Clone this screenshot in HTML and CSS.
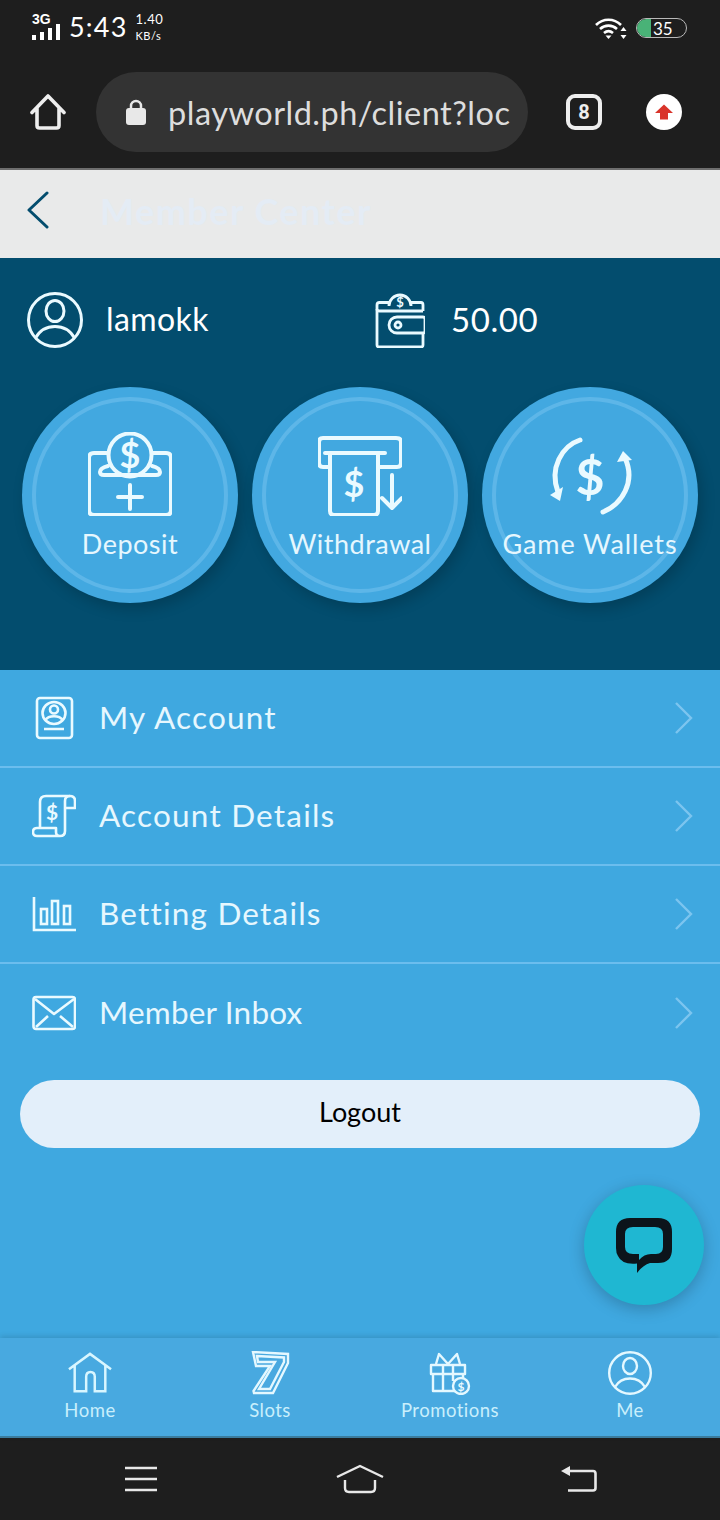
FILE: index.html
```html
<!DOCTYPE html>
<html lang="en">
<head>
  <meta charset="UTF-8" />
  <meta name="viewport" content="width=device-width, initial-scale=1.0"/>
  <title>Member Center</title>
  <link rel="stylesheet" href="styles.css">
</head>
<body>
  <div class="phone-top">
    <div class="status-bar">
      <div class="status-left">
        <div class="signal">
          <span class="signal-type">3G</span>
          <svg class="signal-bars" viewBox="0 0 28 16"><path d="M0 11h4v5H0zM8 8h4v8H8zM16 4h4v12h-4zM24 0h4v16h-4z" fill="#fff"/></svg>
        </div>
        <span class="clock">5:43</span>
        <div class="speed"><span>1.40</span><span class="speed-unit">KB/s</span></div>
      </div>
      <div class="status-right">
        <svg class="wifi" viewBox="0 0 32 22" fill="none" stroke="#fff" stroke-width="2.600">
          <path d="M1 7C8 0 19 0 26 7M5 11c5-4.500 12-4.500 17 0M9 15c3-2.500 6-2.500 9 0"/>
          <path d="M10.500 17.500h6l-3 3.500z" fill="#fff" stroke="none"/>
          <path d="M28.500 9l3 4h-6zM28.500 21l3-4h-6z" fill="#fff" stroke="none"/>
        </svg>
        <div class="battery"><span class="battery-fill"></span><span class="battery-num">35</span></div>
      </div>
    </div>
    <div class="browser-bar">
      <svg class="browser-home" viewBox="0 0 36 36" fill="none" stroke="#eee" stroke-width="3.600" stroke-linejoin="round" stroke-linecap="round">
        <path d="M2 18.500 18 2l16 16.500M7 14v17.500q0 2.500 2.500 2.500h17q2.500 0 2.500-2.500V14"/>
      </svg>
      <div class="url-pill">
        <svg class="lock" viewBox="0 0 20 26"><path d="M5 11V7a5 5 0 0 1 10 0v4" fill="none" stroke="#e8e8e8" stroke-width="2.500"/><rect y="9" width="20" height="17" rx="3" fill="#e8e8e8"/></svg>
        <span class="url-text">playworld.ph/client?loc</span>
      </div>
      <span class="tab-count">8</span>
      <span class="update-btn">
        <svg viewBox="0 0 20 20"><path d="M10 2.500 19 11h-5v6.500H6V11H1z" fill="#d9342b"/></svg>
      </span>
    </div>
  </div>

  <header class="page-head">
    <svg class="back-arrow" viewBox="0 0 22 38" fill="none" stroke="#034d6e" stroke-width="3" stroke-linecap="round" stroke-linejoin="round"><path d="M20 2 2 19l18 17"/></svg>
    <span class="page-title">Member Center</span>
  </header>

  <section class="hero">
    <div class="account-row">
      <div class="account-cell">
        <svg class="account-icon" viewBox="0 0 56 56" fill="none" stroke="#eafaff" stroke-width="3">
          <circle cx="28" cy="28" r="26.500"/><ellipse cx="28" cy="19" rx="9" ry="10.500"/>
          <path d="M8.500 46C13 38 20 34.500 28 34.500S43 38 47.500 46"/>
        </svg>
        <span class="account-name">lamokk</span>
      </div>
      <div class="account-cell balance-cell">
        <svg class="wallet-icon" viewBox="0 0 50 56" fill="none" stroke="#eafaff" stroke-width="2.800" stroke-linejoin="round">
          <path d="M14 14a11 11 0 1 1 22 0"/>
          <path d="M2 13q0-2.500 2.500-2.500H14M36 10.500h10q2 0 2 2.500v6M2 13v40q0 2 2 2h42q2 0 2-2V41"/>
          <path d="M2 17q0 2 2.500 2H48"/>
          <path d="M22 25h26q2 0 2 2v12q0 2-2 2H22a8 8 0 0 1 0-16z"/>
          <circle cx="23" cy="33" r="3"/>
          <text x="25" y="15" class="icon-dollar" font-size="13">$</text>
        </svg>
        <span class="balance">50.00</span>
      </div>
    </div>

    <div class="quick-actions">
      <div class="round-btn">
        <svg class="round-icon" viewBox="0 0 84 84" fill="none" stroke="#eafaff" stroke-width="4" stroke-linecap="round" stroke-linejoin="round">
          <path d="M19 21H6q-5 0-5 5v52q0 5 5 5h72q5 0 5-5V26q0-5-5-5H65"/>
          <circle cx="42" cy="23" r="21.500"/>
          <path d="M20 34q-8 2-8 6 0 3 4 3h52q4 0 4-3 0-4-8-6"/>
          <path d="M42 53v24M30 65h24"/>
          <text x="42" y="36" class="icon-dollar" font-size="36">$</text>
        </svg>
        <span class="round-label">Deposit</span>
      </div>
      <div class="round-btn">
        <svg class="round-icon" viewBox="0 0 84 84" fill="none" stroke="#eafaff" stroke-width="4" stroke-linecap="round" stroke-linejoin="round">
          <path d="M11 35H5q-4 0-4-4V10q0-4 4-4h73q5 0 5 4v21q0 4-4 4H61"/>
          <path d="M7 21h60"/>
          <path d="M12 21v58q0 4 4 4h40q4 0 4-4V21"/>
          <path d="M74 43v33M64 66l10 10 10-10"/>
          <text x="36" y="65" class="icon-dollar" font-size="36">$</text>
        </svg>
        <span class="round-label">Withdrawal</span>
      </div>
      <div class="round-btn">
        <svg class="round-icon" viewBox="0 0 84 84" fill="none" stroke="#eafaff" stroke-width="5" stroke-linecap="round">
          <path d="M32 8C14 14 1 36 10 60"/>
          <path d="M2 63l13-8-3 14z" fill="#eafaff" stroke="none"/>
          <path d="M55 80C74 72 88 50 77 26"/>
          <path d="M75 19l9 9-15 2z" fill="#eafaff" stroke="none"/>
          <text x="42" y="63" class="icon-dollar" font-size="50">$</text>
        </svg>
        <span class="round-label label-wide">Game Wallets</span>
      </div>
    </div>
  </section>

  <main class="member-main">
    <div class="menu-list">
      <div class="menu-row">
        <svg class="menu-icon" viewBox="0 0 44 44" fill="none" stroke="#eafaff" stroke-width="2.600">
          <rect x="5" y="2" width="35" height="40" rx="3"/>
          <ellipse cx="22" cy="17" rx="11.500" ry="11"/><circle cx="22" cy="13.500" r="4"/>
          <path d="M13.500 24c3-5 14-5 17 0M12 33h20" />
        </svg>
        <span class="menu-label">My Account</span>
        <svg class="menu-arrow" viewBox="0 0 20 34" fill="none" stroke="#7cc5ef" stroke-width="2.400"><path d="M2 2l15 15L2 32"/></svg>
      </div>
      <div class="menu-row">
        <svg class="menu-icon" viewBox="0 0 44 44" fill="none" stroke="#eafaff" stroke-width="2.600" stroke-linejoin="round">
          <path d="M8 33V8q0-6 6-6h24q5 0 5 5v7h-9"/>
          <path d="M38 2q-5 0-5 5v30q0 5-5 5H5q-4 0-4-4t4-4h19v4q0 4 4 4"/>
          <text x="20" y="26" class="icon-dollar" font-size="21">$</text>
        </svg>
        <span class="menu-label">Account Details</span>
        <svg class="menu-arrow" viewBox="0 0 20 34" fill="none" stroke="#7cc5ef" stroke-width="2.400"><path d="M2 2l15 15L2 32"/></svg>
      </div>
      <div class="menu-row">
        <svg class="menu-icon" viewBox="0 0 44 44" fill="none" stroke="#eafaff" stroke-width="2.600">
          <path d="M2 5v33h42"/>
          <rect x="9" y="17" width="6" height="15"/><rect x="20" y="9" width="6" height="23"/><rect x="32" y="14" width="6" height="18"/>
        </svg>
        <span class="menu-label">Betting Details</span>
        <svg class="menu-arrow" viewBox="0 0 20 34" fill="none" stroke="#7cc5ef" stroke-width="2.400"><path d="M2 2l15 15L2 32"/></svg>
      </div>
      <div class="menu-row">
        <svg class="menu-icon" viewBox="0 0 44 44" fill="none" stroke="#eafaff" stroke-width="2.600" stroke-linejoin="round">
          <rect x="1.500" y="6" width="41.500" height="32" rx="2.500"/>
          <path d="M3 8l19 15L42 8M4 36l12-11M41 36 28 25"/>
        </svg>
        <span class="menu-label label-tight">Member Inbox</span>
        <svg class="menu-arrow" viewBox="0 0 20 34" fill="none" stroke="#7cc5ef" stroke-width="2.400"><path d="M2 2l15 15L2 32"/></svg>
      </div>
    </div>

    <button class="logout-btn" type="button">Logout</button>

    <div class="chat-fab">
      <svg viewBox="0 0 56 56"><path fill-rule="evenodd" d="M14 0h28q14 0 14 14v17q0 14-14 14H34q-7 2-13 10v-9.500Q6 47 2 38 0 35 0 30V14Q0 0 14 0zm3 9q-8 0-8 7v13q0 7 8 7h6v6q5-6 12-6h5q7 0 7-7V16q0-7-8-7z" fill="#0c141b"/></svg>
    </div>
  </main>

  <nav class="tab-bar">
    <div class="tab-item">
      <svg class="tab-icon" viewBox="0 0 46 44" fill="none" stroke="#d8f6ff" stroke-width="2.600">
        <path d="M1 18 23 2l22 16M7 14v27h12V26q0-5 4.500-5t4.500 5v15h11V14"/>
      </svg>
      <span class="tab-label">Home</span>
    </div>
    <div class="tab-item">
      <svg class="tab-icon" viewBox="0 0 40 44" fill="none" stroke="#e4f8ff" stroke-width="2.400">
        <path d="M3 1l35 2v9L23 42H4l-.5-2 L20 15H6L3 1z"/>
        <path d="M7 5l27 1.500v4.500L20 38H9l16-27H8z"/>
      </svg>
      <span class="tab-label">Slots</span>
    </div>
    <div class="tab-item">
      <svg class="tab-icon" viewBox="0 0 44 44" fill="none" stroke="#e4f8ff" stroke-width="2.400" stroke-linejoin="round">
        <path d="M3 14h34v9H3zM5 23v17h26M35 23v6M15 14v26M25 14v16"/>
        <path d="M20 13 11 3l-3 10M20 13l9-10 3 10"/>
        <circle cx="33" cy="35" r="8" fill="#48a9e0"/>
        <text x="33" y="39.500" class="icon-dollar" font-size="12">$</text>
      </svg>
      <span class="tab-label">Promotions</span>
    </div>
    <div class="tab-item">
      <svg class="tab-icon" viewBox="0 0 44 44" fill="none" stroke="#e4f8ff" stroke-width="2.400">
        <circle cx="22" cy="22" r="20.800"/><ellipse cx="22" cy="15" rx="7" ry="8"/>
        <path d="M7 36c3.500-6 9-8.500 15-8.500S33.500 30 37 36"/>
      </svg>
      <span class="tab-label">Me</span>
    </div>
  </nav>

  <div class="phone-nav">
    <svg class="nav-menu" viewBox="0 0 34 26"><path d="M1 2h32M1 13h32M1 24h32" stroke="#e8e8e8" stroke-width="2.600"/></svg>
    <svg class="nav-home" viewBox="0 0 48 30" fill="none" stroke="#e8e8e8" stroke-width="2.400"><path d="M1 13 24 2l23 11M9 16v8q0 4 4 4h22q4 0 4-4v-8"/></svg>
    <svg class="nav-back" viewBox="0 0 36 28" fill="none" stroke="#e8e8e8" stroke-width="2.600"><path d="M6 6h26q2.500 0 2.500 2.500V23q0 2.500-2.500 2.500H7"/><path d="M0 6l9-5v10z" fill="#e8e8e8" stroke="none"/></svg>
  </div>
</body>
</html>
```

FILE: styles.css
```css
* {
  box-sizing: border-box;
}
html, body {
  margin: 0;
  padding: 0;
}
body {
  width: 720px;
  height: 1520px;
  display: flex;
  flex-direction: column;
  overflow: hidden;
  font-family: Lato, "Open Sans", sans-serif;
  background-color: #3fa8e0;
}
svg {
  display: block;
  flex: none;
}
.icon-dollar {
  font-family: Lato, sans-serif;
  font-weight: bold;
  fill: #eafaff;
  stroke: none;
  text-anchor: middle;
}

/* phone status + browser bar */
.phone-top {
  height: 170px;
  flex: none;
  background-color: #1e1e1e;
  border-bottom: 2px solid #6e6e6e;
}
.status-bar {
  height: 72px;
  padding: 13px 33px 0 32px;
  display: flex;
  justify-content: space-between;
  align-items: flex-start;
  color: #fff;
}
.status-left, .status-right {
  display: flex;
  align-items: flex-start;
}
.signal {
  width: 28px;
}
.signal-type {
  display: block;
  height: 12px;
  font-family: "Liberation Sans", sans-serif;
  font-size: 14px;
  line-height: 12px;
  font-weight: bold;
}
.signal-bars {
  width: 28px;
  height: 16px;
  margin-top: -1px;
}
.clock {
  margin-left: 9px;
  font-size: 27px;
  line-height: 28px;
  letter-spacing: 1.200px;
}
.speed {
  margin-left: 8px;
  display: flex;
  flex-direction: column;
  font-size: 13px;
  line-height: 13px;
  letter-spacing: 0.500px;
}
.speed-unit {
  margin-top: 3px;
  font-size: 11px;
}
.status-right {
  padding-top: 5px;
}
.wifi {
  width: 32px;
  height: 22px;
  margin-right: 9px;
}
.battery {
  width: 51px;
  height: 20px;
  display: flex;
  align-items: center;
  border: 1.500px solid #b9b9b9;
  border-radius: 10px;
  overflow: hidden;
}
.battery-fill {
  width: 14px;
  height: 100%;
  margin-right: 2px;
  background-color: #49b277;
  border-radius: 8px 0 0 8px;
}
.battery-num {
  font-size: 17px;
  line-height: 17px;
}
.browser-bar {
  height: 80px;
  padding-left: 30px;
  display: flex;
  align-items: center;
}
.browser-home {
  width: 36px;
  height: 36px;
}
.url-pill {
  width: 432px;
  height: 80px;
  margin-left: 30px;
  padding: 0 14px 0 30px;
  display: flex;
  align-items: center;
  background-color: #333;
  border-radius: 40px;
}
.lock {
  width: 20px;
  height: 26px;
}
.url-text {
  margin-left: 22px;
  font-size: 32.500px;
  color: #ddd;
  white-space: nowrap;
  letter-spacing: 0.500px;
}
.tab-count {
  width: 36px;
  height: 36px;
  margin-left: 38px;
  display: flex;
  align-items: center;
  justify-content: center;
  border: 4px solid #eee;
  border-radius: 9px;
  color: #eee;
  font-family: "Roboto", sans-serif;
  font-size: 20px;
  font-weight: bold;
}
.update-btn {
  width: 36px;
  height: 36px;
  margin-left: 44px;
  padding: 8px;
  background-color: #fff;
  border-radius: 50%;
}

/* page header */
.page-head {
  height: 88px;
  flex: none;
  padding: 0 0 9px 27px;
  display: flex;
  align-items: center;
  background-color: #e9eaea;
}
.back-arrow {
  width: 22px;
  height: 38px;
}
.page-title {
  margin-left: 51px;
  padding-top: 3px;
  font-size: 36px;
  font-weight: bold;
  letter-spacing: 1.500px;
  color: #e4ecf5;
}

/* blue hero */
.hero {
  height: 412px;
  flex: none;
  padding: 34px 22px 0;
  background-color: #034d6e;
}
.account-row {
  height: 56px;
  display: flex;
}
.account-cell {
  width: 353px;
  flex: none;
  padding-left: 5px;
  display: flex;
  align-items: center;
}
.account-icon {
  width: 56px;
  height: 56px;
}
.account-name {
  margin-left: 23px;
  padding-bottom: 3px;
  font-size: 32px;
  letter-spacing: 0.400px;
  color: #fff;
}
.balance-cell {
  flex: 1;
  width: auto;
  padding-left: 0;
}
.wallet-icon {
  width: 50px;
  height: 56px;
}
.balance {
  margin-left: 26px;
  padding-bottom: 3px;
  font-size: 33px;
  letter-spacing: 0.600px;
  color: #fff;
}
.quick-actions {
  margin-top: 39px;
  display: flex;
  gap: 14px;
}
.round-btn {
  position: relative;
  width: 216px;
  height: 216px;
  padding-top: 45px;
  display: flex;
  flex-direction: column;
  align-items: center;
  background-color: #42a8e0;
  border-radius: 50%;
  box-shadow: 4px 6px 14px rgba(0,0,0,0.18);
}
.round-btn::before {
  content: "";
  position: absolute;
  top: 10px;
  right: 10px;
  bottom: 10px;
  left: 10px;
  border: 4px solid #5db6e8;
  border-radius: 50%;
}
.round-icon {
  position: relative;
  width: 84px;
  height: 84px;
}
.round-label {
  position: relative;
  margin-top: 10px;
  font-size: 27px;
  line-height: 36px;
  letter-spacing: 0.500px;
  color: #e6f7fe;
  white-space: nowrap;
}
.label-wide {
  letter-spacing: 0.900px;
}

/* menu list */
.member-main {
  position: relative;
  flex: 1;
  background-color: #3fa8e0;
}
.menu-row {
  height: 98px;
  padding: 0 26px 0 32px;
  display: flex;
  align-items: center;
  border-bottom: 2px solid #6bbdee;
}
.menu-row:last-child {
  border-bottom: none;
}
.menu-icon {
  width: 44px;
  height: 44px;
}
.menu-label {
  flex: 1;
  margin-left: 23px;
  padding-bottom: 3px;
  font-size: 31.500px;
  letter-spacing: 1.200px;
  color: #e6f7fe;
}
.label-tight {
  letter-spacing: 0.200px;
}
.menu-arrow {
  width: 20px;
  height: 34px;
}
.logout-btn {
  display: block;
  width: 680px;
  height: 68px;
  margin: 18px 20px 0;
  padding: 0 0 5px;
  background-color: #e3effa;
  color: #000;
  font-family: Lato, sans-serif;
  font-size: 27px;
  border: none;
  border-radius: 34px;
  cursor: pointer;
}
.chat-fab {
  position: absolute;
  right: 16px;
  bottom: 33px;
  width: 120px;
  height: 120px;
  padding: 33px 32px 31px;
  background-color: #1fb7d2;
  border-radius: 50%;
  box-shadow: 0 4px 16px rgba(0,0,0,0.22);
}

/* bottom tabs */
.tab-bar {
  position: relative;
  height: 100px;
  flex: none;
  display: grid;
  grid-template-columns: repeat(4, 180px);
  padding-top: 13px;
  background-color: #48a9e0;
  border-bottom: 2px solid #3a7c9e;
  box-shadow: 0 -2px 5px rgba(0,0,0,0.12);
}
.tab-item {
  display: flex;
  flex-direction: column;
  align-items: center;
}
.tab-icon {
  width: 44px;
  height: 44px;
}
.tab-label {
  margin-top: 3px;
  font-size: 18.500px;
  line-height: 24px;
  letter-spacing: 0.500px;
  color: #c9effc;
}

/* phone navigation */
.phone-nav {
  height: 82px;
  flex: none;
  display: grid;
  grid-template-columns: repeat(3, 1fr);
  align-items: center;
  justify-items: center;
  padding: 0 31px;
  background-color: #1e1e1e;
}
.nav-menu {
  width: 34px;
  height: 26px;
}
.nav-home {
  width: 48px;
  height: 30px;
}
.nav-back {
  width: 36px;
  height: 28px;
}
```
